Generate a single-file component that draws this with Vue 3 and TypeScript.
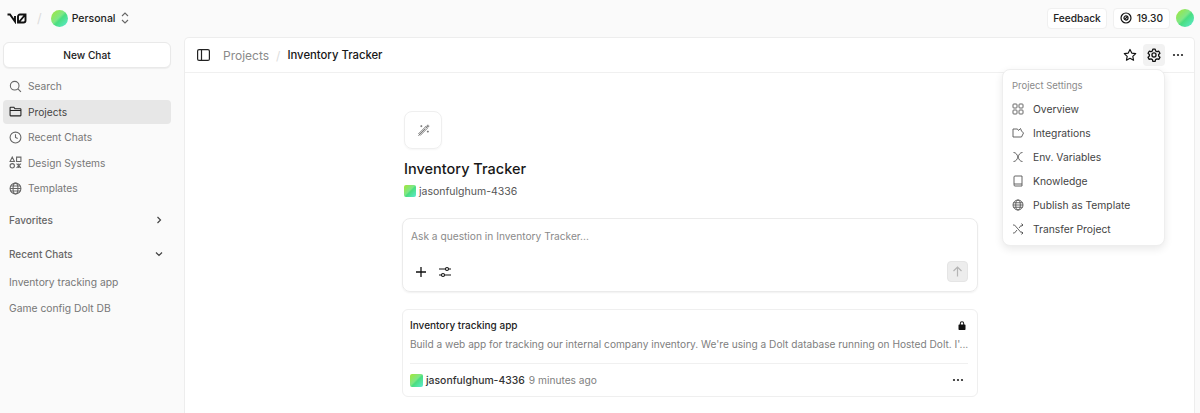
<template>
  <div class="app">
    <header class="topbar">
      <div class="topbar-left">
        <svg class="logo" width="21" height="11" viewBox="0 0 21 11" fill="none" stroke="#111" stroke-width="1.9">
          <path d="M0.5 1.500h2.500l5 7V3" />
          <path d="M11 9.500V3.500a2 2 0 0 1 2-2h5.500v6a2 2 0 0 1-2 2H11zM12 9l6-7" />
        </svg>
        <span class="slash">/</span>
        <span class="avatar round team-avatar"></span>
        <span class="team">Personal</span>
        <svg width="10" height="14" viewBox="0 0 10 14" fill="none" stroke="#666" stroke-width="1.100">
          <path d="M2 5l3-3 3 3M2 9l3 3 3-3" />
        </svg>
      </div>
      <div class="topbar-right">
        <button class="chip">Feedback</button>
        <button class="chip credits">
          <svg width="12" height="12" viewBox="0 0 13 13" fill="none" stroke="#111" stroke-width="1.300">
            <circle cx="6.500" cy="6.500" r="5.400" />
            <circle cx="6.500" cy="6.500" r="2.200" />
            <path d="M5 8l3-3" />
          </svg>
          19.30
        </button>
        <span class="avatar round user-avatar"></span>
      </div>
    </header>

    <div class="body">
      <aside class="sidebar">
        <button class="new-chat">New Chat</button>
        <nav class="nav">
          <a v-for="item in navItems" :key="item.label" :class="['nav-item', { active: item.active }]">
            <svg width="13" height="13" viewBox="0 0 24 24" fill="none" stroke="currentColor" stroke-width="2" v-html="item.icon"></svg>
            {{ item.label }}
          </a>
        </nav>
        <div class="section favorites">
          <span>Favorites</span>
          <svg width="8" height="8" viewBox="0 0 8 8" fill="none" stroke="#444" stroke-width="1.200"><path d="M2.500 1l3 3-3 3" /></svg>
        </div>
        <div class="section recents">
          <span>Recent Chats</span>
          <svg width="8" height="8" viewBox="0 0 8 8" fill="none" stroke="#444" stroke-width="1.200"><path d="M1 2.500l3 3 3-3" /></svg>
        </div>
        <a v-for="chat in recentChats" :key="chat" class="chat-link">{{ chat }}</a>
      </aside>

      <main class="panel">
        <div class="panel-header">
          <svg class="toggle" width="13" height="12" viewBox="0 0 13 12" fill="none" stroke="#222" stroke-width="1.200">
            <rect x="0.600" y="0.600" width="11.800" height="10.800" rx="1.500" />
            <path d="M4.500 0.600v10.800" />
          </svg>
          <span class="crumb">Projects</span>
          <span class="crumb-sep">/</span>
          <span class="crumb-current">Inventory Tracker</span>
          <div class="header-actions">
            <button class="icon-btn">
              <svg width="14" height="14" viewBox="0 0 24 24" fill="none" stroke="#111" stroke-width="2" stroke-linejoin="round">
                <path d="M12 2.500l3 6.200 6.800.9-5 4.700 1.300 6.700-6.100-3.300-6.100 3.300 1.300-6.700-5-4.700 6.800-.9z" />
              </svg>
            </button>
            <button class="icon-btn selected">
              <svg width="14" height="14" viewBox="0 0 24 24" fill="none" stroke="#111" stroke-width="2.200" stroke-linejoin="round">
                <path d="M10 2h4l.7 3 2.500 1.400 3-.9 2 3.500-2.200 2.100v2.800l2.200 2.100-2 3.500-3-.9-2.500 1.400-.7 3h-4l-.7-3-2.500-1.400-3 .9-2-3.500 2.200-2.100v-2.800L1.800 9l2-3.500 3 .9L9.300 5z" />
                <circle cx="12" cy="12" r="3.500" />
              </svg>
            </button>
            <button class="icon-btn">
              <svg width="12" height="4" viewBox="0 0 12 4" fill="#222">
                <circle cx="2" cy="2" r="1.100" /><circle cx="6" cy="2" r="1.100" /><circle cx="10" cy="2" r="1.100" />
              </svg>
            </button>
          </div>
        </div>

        <div class="content">
          <div class="project-icon">
            <svg width="13" height="13" viewBox="0 0 24 24" fill="none" stroke="#777" stroke-width="1.800" stroke-linecap="round">
              <path d="M3 21L15 9M6 21l13-13-3-3M3 18L16 5" />
              <path d="M20 2v4M18 4h4M8 3v2M7 4h2M20 13v2M19 14h2" />
            </svg>
          </div>
          <h1 class="title">Inventory Tracker</h1>
          <div class="owner">
            <span class="avatar square"></span>
            jasonfulghum-4336
          </div>

          <div class="composer">
            <div class="placeholder">Ask a question in Inventory Tracker...</div>
            <div class="composer-tools">
              <svg width="12" height="12" viewBox="0 0 12 12" fill="none" stroke="#111" stroke-width="1.300">
                <path d="M6 1v10M1 6h10" />
              </svg>
              <svg width="14" height="12" viewBox="0 0 14 12" fill="none" stroke="#111" stroke-width="1.100">
                <path d="M1 3h6.500M10.500 3H13M1 9h2.500M6.500 9H13" />
                <circle cx="9" cy="3" r="1.500" /><circle cx="5" cy="9" r="1.500" />
              </svg>
              <button class="send">
                <svg width="11" height="11" viewBox="0 0 11 11" fill="none" stroke="#b5b5b5" stroke-width="1.200">
                  <path d="M5.500 10.500V1M1.500 5l4-4 4 4" />
                </svg>
              </button>
            </div>
          </div>

          <article class="chat-card">
            <div class="card-top">
              <span class="card-title">Inventory tracking app</span>
              <svg width="8" height="9" viewBox="0 0 8 9" fill="#111">
                <path d="M1.800 3.500V2.400a2.200 2.200 0 0 1 4.400 0v1.100h.6a.7.7 0 0 1 .7.7v4a.7.7 0 0 1-.7.7H1.200a.7.7 0 0 1-.7-.7v-4a.7.7 0 0 1 .7-.7zm1 0h2.400V2.400a1.200 1.200 0 0 0-2.400 0z" />
              </svg>
            </div>
            <p class="card-desc">Build a web app for tracking our internal company inventory. We're using a Dolt database running on Hosted Dolt. I'...</p>
            <div class="card-foot">
              <span class="avatar square large"></span>
              <span class="card-owner">jasonfulghum-4336</span>
              <span class="card-time">9 minutes ago</span>
              <svg class="card-more" width="12" height="4" viewBox="0 0 12 4" fill="#222">
                <circle cx="2" cy="2" r="1.100" /><circle cx="6" cy="2" r="1.100" /><circle cx="10" cy="2" r="1.100" />
              </svg>
            </div>
          </article>
        </div>

        <div class="menu">
          <div class="menu-label">Project Settings</div>
          <a v-for="item in menuItems" :key="item.label" class="menu-item">
            <svg width="12" height="12" viewBox="0 0 24 24" fill="none" stroke="#555" stroke-width="1.800" v-html="item.icon"></svg>
            {{ item.label }}
          </a>
        </div>
      </main>
    </div>
  </div>
</template>

<script setup lang="ts">
interface IconItem {
  label: string
  icon: string
  active?: boolean
}

const globe = '<circle cx="12" cy="12" r="10"/><path d="M2 12h20M3 7.500h18M3 16.500h18"/><ellipse cx="12" cy="12" rx="4.500" ry="10"/>'

const navItems: IconItem[] = [
  { label: 'Search', icon: '<circle cx="10.500" cy="10.500" r="8"/><path d="M16.500 16.500L22 22"/>' },
  { label: 'Projects', active: true, icon: '<path d="M2 5a1 1 0 0 1 1-1h6l2 3h10a1 1 0 0 1 1 1v11a1 1 0 0 1-1 1H3a1 1 0 0 1-1-1zM2 10h20"/>' },
  { label: 'Recent Chats', icon: '<circle cx="12" cy="12" r="10"/><path d="M12 6v6l4 2"/>' },
  { label: 'Design Systems', icon: '<path d="M2 10l4-8 4 8zM14 2h8v8h-8z"/><circle cx="6" cy="18" r="4"/><path d="M14 14l8 8M22 14l-8 8M18 14v8"/>' },
  { label: 'Templates', icon: globe },
]

const recentChats: string[] = ['Inventory tracking app', 'Game config Dolt DB']

const menuItems: IconItem[] = [
  { label: 'Overview', icon: '<rect x="2" y="2" width="8" height="8" rx="1.500"/><rect x="14" y="2" width="8" height="8" rx="1.500"/><rect x="2" y="14" width="8" height="8" rx="1.500"/><rect x="14" y="14" width="8" height="8" rx="1.500"/>' },
  { label: 'Integrations', icon: '<path d="M2 4h9l2 3 4-4 2 5 4 4-4 8H2z"/>' },
  { label: 'Env. Variables', icon: '<path d="M3 3c5 0 7 4 9 9s4 9 9 9M21 3c-5 0-7 4-9 9s-4 9-9 9"/>' },
  { label: 'Knowledge', icon: '<path d="M4 19V4a2 2 0 0 1 2-2h14v20H6a2 2 0 0 1-2-2zM4 18h16"/>' },
  { label: 'Publish as Template', icon: globe },
  { label: 'Transfer Project', icon: '<path d="M2 4h3l14 16h3M2 20h3l5-6M14 10l5-6h3M19 1l3 3-3 3M19 17l3 3-3 3"/>' },
]
</script>

<style>
html,
body {
  margin: 0;
  background: #fafafa;
}
</style>

<style scoped>
.app {
  width: 1200px;
  height: 413px;
  overflow: hidden;
  background: #fafafa;
  font-family: Inter, "Liberation Sans", sans-serif;
  color: #171717;
  font-size: 10.200px;
}

.topbar {
  height: 36px;
  display: flex;
  align-items: center;
  justify-content: space-between;
  padding: 0 6px 0 7px;
}

.topbar-left,
.topbar-right {
  display: flex;
  align-items: center;
}

.slash {
  margin: 0 9px;
  color: #ddd;
  font-size: 13px;
}

.team {
  margin: 0 4px 0 4px;
  font-size: 10.500px;
  font-weight: 500;
  color: #222;
}

.avatar {
  display: inline-block;
  background: linear-gradient(135deg, #a3e635 0%, #7ee787 45%, #4ade80 55%, #5eead4 100%);
  flex-shrink: 0;
}

.avatar.round {
  border-radius: 50%;
}

.team-avatar {
  width: 17px;
  height: 17px;
}

.user-avatar {
  width: 18px;
  height: 18px;
}

.avatar.square {
  width: 12px;
  height: 12px;
  border-radius: 2px;
}

.avatar.large {
  width: 13px;
  height: 13px;
}

.topbar-right {
  gap: 6px;
}

.chip {
  height: 21px;
  padding: 0 5px;
  border: 1px solid #f0f0f0;
  border-radius: 4px;
  background: #fff;
  font: 500 10.200px Inter, "Liberation Sans", sans-serif;
  color: #222;
  display: flex;
  align-items: center;
  gap: 5px;
}

.chip.credits {
  padding: 0 6px;
}

.body {
  display: flex;
  height: 377px;
}

.sidebar {
  width: 184px;
  flex-shrink: 0;
  padding: 6px 13px 0 3px;
  box-sizing: border-box;
}

.new-chat {
  width: 100%;
  height: 26px;
  border: 1px solid #e9e9e9;
  border-radius: 6px;
  background: #fff;
  box-shadow: 0 1px 1px rgba(0, 0, 0, 0.05);
  font: 500 10.200px Inter, "Liberation Sans", sans-serif;
  color: #222;
}

.nav {
  margin-top: 6px;
  display: flex;
  flex-direction: column;
  gap: 1.500px;
}

.nav-item {
  height: 24px;
  padding: 0 6px;
  display: flex;
  align-items: center;
  gap: 6px;
  border-radius: 4px;
  color: #777;
}

.nav-item svg {
  color: #666;
}

.nav-item.active {
  background: #e7e7e7;
  color: #444;
}

.nav-item.active svg {
  color: #222;
}

.section {
  display: flex;
  align-items: center;
  justify-content: space-between;
  padding: 0 8px 0 6px;
  color: #666;
  font-size: 10px;
  font-weight: 500;
}

.favorites {
  margin-top: 8px;
  height: 24px;
}

.recents {
  margin-top: 10px;
  height: 24px;
}

.chat-link {
  display: flex;
  align-items: center;
  height: 26px;
  padding-left: 6px;
  color: #777;
  font-size: 10.300px;
}

.recents + .chat-link {
  margin-top: 3px;
}

.panel {
  position: relative;
  flex: 1;
  margin-right: 5px;
  margin-top: 1px;
  background: #fff;
  border: 1px solid #ededed;
  border-bottom: none;
  border-radius: 5px 5px 0 0;
}

.panel-header {
  height: 34px;
  display: flex;
  align-items: center;
  padding: 0 5px 0 12px;
  border-bottom: 1px solid #f0f0f0;
}

.toggle {
  margin-right: 13px;
}

.crumb {
  color: #8a8a8a;
  font-size: 12px;
}

.crumb-sep {
  margin: 0 7px;
  color: #ddd;
  font-size: 12px;
}

.crumb-current {
  color: #171717;
  font-size: 11.300px;
  font-weight: 500;
}

.header-actions {
  margin-left: auto;
  display: flex;
  align-items: center;
  gap: 2px;
}

.icon-btn {
  width: 22px;
  height: 22px;
  padding: 0;
  border: none;
  border-radius: 4px;
  background: transparent;
  display: flex;
  align-items: center;
  justify-content: center;
}

.icon-btn.selected {
  background: #f2f2f2;
}

.content {
  width: 576px;
  margin-left: 217px;
  padding-top: 38px;
}

.project-icon {
  width: 36px;
  height: 36px;
  margin-left: 2px;
  border: 1px solid #efefef;
  border-radius: 8px;
  box-shadow: 0 1px 2px rgba(0, 0, 0, 0.04);
  display: flex;
  align-items: center;
  justify-content: center;
}

.title {
  margin: 10px 0 0 2px;
  font-size: 14.500px;
  line-height: 20px;
  font-weight: 500;
  color: #171717;
}

.owner {
  margin: 5px 0 0 2px;
  display: flex;
  align-items: center;
  gap: 3px;
  height: 14px;
  font-size: 10.500px;
  color: #555;
}

.composer {
  margin-top: 20px;
  height: 74px;
  box-sizing: border-box;
  padding: 10px 9px 9px 8px;
  border: 1px solid #ebebeb;
  border-radius: 8px;
  box-shadow: 0 1px 2px rgba(0, 0, 0, 0.06);
  display: flex;
  flex-direction: column;
  justify-content: space-between;
}

.placeholder {
  color: #8a8a8a;
  line-height: 14px;
}

.composer-tools {
  display: flex;
  align-items: center;
  gap: 11px;
  padding-left: 4px;
}

.send {
  margin-left: auto;
  width: 21px;
  height: 21px;
  padding: 0;
  border: 1px solid #e5e5e5;
  border-radius: 4px;
  background: #ededed;
  display: flex;
  align-items: center;
  justify-content: center;
}

.chat-card {
  margin-top: 17px;
  height: 88px;
  box-sizing: border-box;
  padding: 8px 9px 0 7px;
  border: 1px solid #efefef;
  border-radius: 6px;
}

.card-top {
  display: flex;
  align-items: center;
  justify-content: space-between;
  padding-right: 2px;
}

.card-title {
  font-size: 10px;
  font-weight: 500;
  color: #222;
  line-height: 14px;
}

.card-desc {
  margin: 5px 0 0;
  padding-bottom: 12px;
  border-bottom: 1px solid #f0f0f0;
  color: #808080;
  font-size: 10.150px;
  line-height: 14px;
  white-space: nowrap;
}

.card-foot {
  display: flex;
  align-items: center;
  height: 32px;
  gap: 3px;
}

.card-owner {
  color: #333;
  font-size: 10.400px;
  font-weight: 500;
}

.card-time {
  color: #808080;
  margin-left: 1px;
}

.card-more {
  margin-left: auto;
  margin-right: 4px;
}

.menu {
  position: absolute;
  top: 31px;
  left: 817px;
  width: 163px;
  height: 177px;
  box-sizing: border-box;
  padding: 9px;
  background: #fff;
  border: 1px solid #eee;
  border-radius: 8px;
  box-shadow: 0 3px 8px rgba(0, 0, 0, 0.09);
}

.menu-label {
  height: 14px;
  line-height: 14px;
  margin-bottom: 4px;
  color: #8a8a8a;
  font-size: 9.500px;
}

.menu-item {
  height: 24px;
  display: flex;
  align-items: center;
  gap: 9px;
  color: #444;
  font-size: 10.300px;
}
</style>
